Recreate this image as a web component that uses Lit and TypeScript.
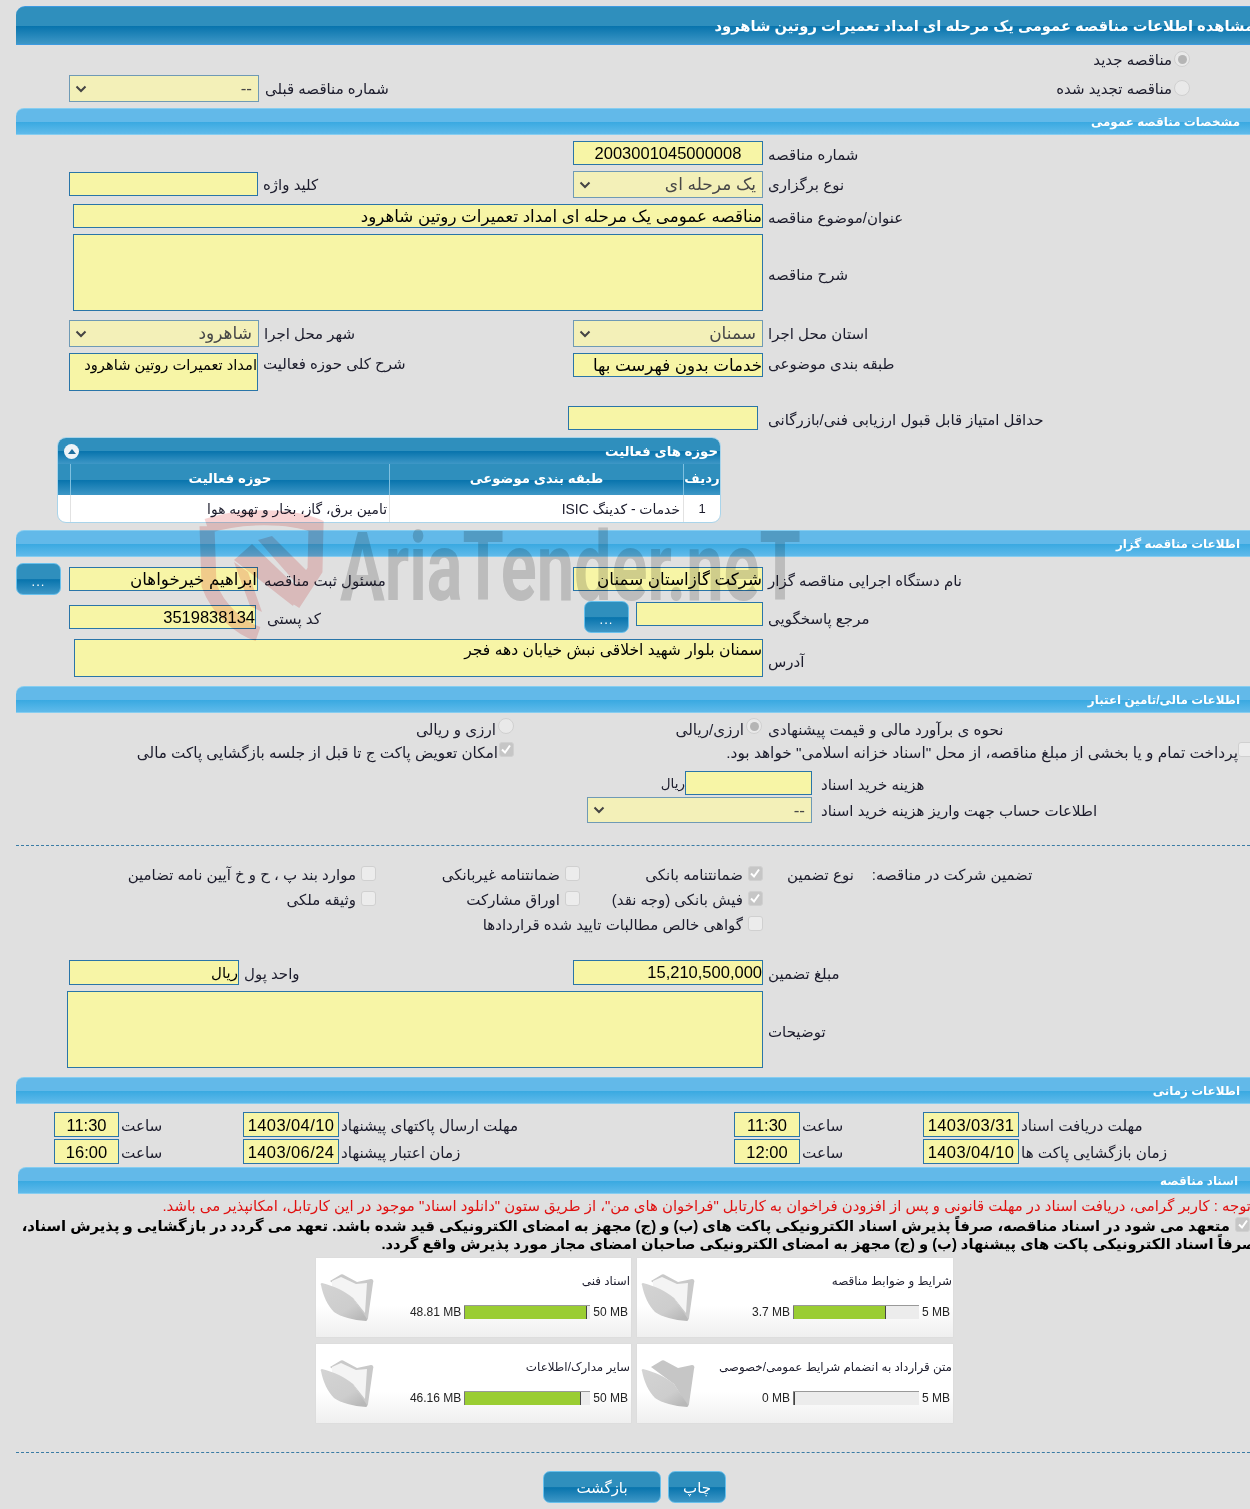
import { LitElement, html, css, svg } from "lit";
import { customElement } from "lit/decorators.js";

const inp = (cls: string, t = "") => html`<div class="inp ${cls}">${t}</div>`;
const sel = (cls: string, t: string) => html`<div class="sel ${cls}"><svg class="chev" viewBox="0 0 12 8" width="12" height="8"><path d="M1.5 1.5 6 6l4.5-4.5" fill="none" stroke="#444" stroke-width="2"/></svg><span>${t}</span></div>`;
const lb = (t: string, cls = "") => html`<span class="lb ${cls}">${t}</span>`;
const sec = (t: string, cls = "") => html`<div class="sec ${cls}"><span>${t}</span></div>`;
const dots = () => html`<div class="btn dots">...</div>`;
const tick = html`<svg viewBox="0 0 14 14" width="14" height="14"><path d="M3 7.5 6 10.5 11 3.5" fill="none" stroke="#fff" stroke-width="2"/></svg>`;
const cb = (t: string, on = false) => html`<label class="chk"><span class="lb">${t}</span><span class="box ${on ? "on" : ""}">${on ? tick : ""}</span></label>`;
const rad = (on = false) => html`<span class="rad ${on ? "on" : ""}"></span>`;

const folder = (paper: boolean) => svg`<svg class="folder" viewBox="0 0 60 60" width="60" height="60">
  <defs>
    <linearGradient id="fg" x1="0" y1="0" x2=".8" y2="1"><stop offset="0" stop-color="#d4d4d4"/><stop offset=".7" stop-color="#cdcdcd"/><stop offset="1" stop-color="#b8b8b8"/></linearGradient>
    <filter id="soft"><feGaussianBlur stdDeviation=".6"/></filter>
  </defs>
  <g filter="url(#soft)">
    <path d="M12 11 22 5c1-1 3-1 4 0l13 7 14-3c2 0 3 2 2 4l-5 35c0 2-1 2-2 1L35 28Z" fill="${paper ? "#c9c9c9" : "#c6c6c6"}"/>
    ${paper ? svg`<path d="M14 11 23 7l15 7 11-1-2 30-12-15-21-8Z" fill="#f4f4f4"/>` : ""}
    <path d="M3 15c-1-1 0-2 1-2 12 3 23 8 31 15l14 21c0 1 0 2-1 2-13-1-25-4-32-9C10 36 5 26 3 15Z" fill="url(#fg)"/>
  </g>
</svg>`;

const card = (title: string, used: string, max: string, pct: number, paper = true) => html`
  <div class="card">
    ${folder(paper)}
    <div class="cbody">
      <div class="ctitle">${title}</div>
      <div class="metric">
        <span>${used}</span>
        <div class="bar"><div class="fill" style="width:${pct}%"></div></div>
        <span>${max}</span>
      </div>
    </div>
  </div>`;

@customElement("app-root")
export class AppRoot extends LitElement {
  static styles = css`
    :host { display: block; position: relative; width: 1250px; height: 1509px; overflow: hidden; background: #e0e0e0; font-family: "Liberation Sans", "DejaVu Sans", sans-serif; font-size: 15px; color: #1c1c2c; }
    .page { padding-top: 6px; display: flex; flex-direction: column; }
    .page > * { flex: none; }
    .title { margin-left: 16px; height: 37px; border: 1px solid #3d9ae0; border-width: 1px 0; border-top-left-radius: 9px; background: linear-gradient(#2f8fbd 0 50%, #0874ad 52%, #3e97c6 100%); color: #fff; font-weight: bold; font-size: 14.7px; direction: rtl; display: flex; align-items: center; white-space: nowrap; overflow: hidden; }
    .title span { margin-right: -4px; }
    .sec { margin-left: 16px; height: 25px; border: 1px solid #86cdf0; border-width: 1px 0; border-top-left-radius: 8px; background: linear-gradient(#62b9e9 0 50%, #39a9e1 52%, #5fbaea 100%); color: #fff; font-weight: bold; font-size: 11.9px; direction: rtl; display: flex; align-items: center; padding-right: 10px; white-space: nowrap; }
    .sec.docs { margin: 3px 0 0 18px; padding-right: 12px; }
    .row { display: flex; align-items: flex-start; }
    .L { margin-left: 69px; width: 504px; display: flex; gap: 5px; align-items: flex-start; flex: none; }
    .R { display: flex; gap: 5px; align-items: flex-start; }
    .lb { direction: rtl; white-space: nowrap; line-height: 27px; }
    .inp { box-sizing: border-box; height: 24px; line-height: 23px; background: #f7f5a6; border: 1px solid #2a75a8; direction: rtl; white-space: nowrap; overflow: hidden; color: #000; font-size: 16.7px; flex: none; }
    .sel { box-sizing: border-box; width: 190px; height: 27px; line-height: 25px; background: #f3f0b8; border: 1px solid #6f9ab5; display: flex; justify-content: space-between; align-items: center; padding: 0 6px 0 5px; color: #484848; font-size: 17px; direction: ltr; flex: none; }
    .sel span { direction: rtl; }
    .chev { flex: none; }
    .w190 { width: 190px; } .w189 { width: 189px; } .w187 { width: 187px; } .w170 { width: 170px; } .w127 { width: 127px; } .w96 { width: 96px; } .w66 { width: 66px; } .w65 { width: 65px; } .w690 { width: 690px; } .w696 { width: 696px; }
    .num { font-size: 16.5px; font-family: "Liberation Sans", sans-serif; }
    .date { letter-spacing: .4px; }
    .ctr { text-align: center; }
    .area { height: 77px; }
    .unit { font-size: 15px; }
    .intro { height: 63px; display: flex; flex-direction: column; }
    .i1 { height: 24px; margin-top: 4px; width: 1190px; justify-content: flex-end; gap: 2px; }
    .i1 .lb { line-height: 24px; margin-top: -1px; }
    .i1 .rad { margin-top: 2px; }
    .i2 { height: 27px; margin-top: 2px; }
    .i2 .L { width: 985px; gap: 6px; }
    .i2 .R { width: 136px; justify-content: flex-end; gap: 2px; }
    .i2 .R .lb { line-height: 24px; margin-top: 2px; }
    .i2 .R .rad { margin-top: 5px; }
    .rad { display: inline-block; box-sizing: border-box; width: 16px; height: 16px; border-radius: 50%; border: 1.5px solid #d0d0d0; background: #e9e9e9; position: relative; flex: none; }
    .rad.on::after { content: ""; position: absolute; inset: 2.5px; border-radius: 50%; background: #b5b5b5; }
    .box { display: inline-flex; box-sizing: border-box; width: 15px; height: 15px; border-radius: 3px; border: 1.5px solid #d0d0d0; background: #ececec; flex: none; }
    .box.on { background: #c6c6c6; }
    .box svg { margin: -1px; }
    .chk { display: flex; gap: 5px; align-items: flex-start; }
    .chk .lb { line-height: 24px; margin-top: -1px; }
    .g .box { margin-top: 2px; }
    .mt6 { margin-top: 6px; } .mt7 { margin-top: 7px; } .mt9 { margin-top: 9px; } .mt15 { margin-top: 15px; }
    .top1 { margin-top: 1px; } .top4 { margin-top: 4px; } .topm3 { margin-top: -3px; }
    .h24 { height: 24px; } .h25 { height: 25px; } .h27 { height: 27px; } .h32 { height: 32px; } .h38 { height: 38px; } .h77 { height: 77px; }
    .wide { margin-left: 73px; display: flex; gap: 5px; align-items: flex-start; }
    .wide2 { margin-left: 67px; }
    .midlb { line-height: 81px; }
    .tall { height: 38px; font-size: 14.7px; }
    .minL { width: 499px; }
    .gap10 { gap: 10px; }
    .tbl { margin: 7px 0 0 57px; width: 664px; height: 86px; box-sizing: border-box; border: 1px solid #a9d4ea; border-radius: 9px; overflow: hidden; background: #fff; display: flex; flex-direction: column; }
    .thead { height: 26px; background: linear-gradient(#2f8fbd 0 50%, #0874ad 52%, #3e97c6 100%); color: #fff; font-weight: bold; font-size: 13.3px; direction: rtl; display: flex; align-items: center; justify-content: space-between; padding: 0 2px 0 6px; flex: none; }
    .toggle { width: 15px; height: 15px; border-radius: 50%; background: #eef4f8; display: flex; align-items: center; justify-content: center; }
    .tri { width: 0; height: 0; border: 4px solid transparent; border-top: 0; border-bottom: 5px solid #1f6f9f; }
    .cols { display: grid; grid-template-columns: 13px 319px 294px 36px; }
    .hcols { height: 31px; background: linear-gradient(#2f8fbd 0 50%, #0874ad 52%, #3e97c6 100%); color: #fff; font-weight: bold; font-size: 13.3px; flex: none; }
    .hcols > div { border-right: 1px solid #7fc0e0; text-align: center; line-height: 29px; direction: rtl; white-space: nowrap; }
    .hcols > div:last-child { border-right: 0; }
    .bcols { flex: 1; font-size: 13.9px; }
    .bcols > div { border-right: 1px solid #e2e2e2; direction: rtl; padding: 0 3px; line-height: 28px; white-space: nowrap; overflow: hidden; }
    .bcols > div:last-child { border-right: 0; text-align: center; font-size: 13px; }
    .bcols .l2 { padding-right: 2px; }
    .btn { box-sizing: border-box; border: 1px solid #68c0ec; border-radius: 7px; background: linear-gradient(#2f8fbd 0 50%, #0874ad 52%, #3e97c6 100%); color: #fff; text-align: center; font-size: 15px; flex: none; }
    .dots { width: 45px; height: 32px; line-height: 36px; font-size: 13px; letter-spacing: 1px; font-family: "Liberation Sans", sans-serif; }
    .contact1 { margin-left: 16px; }
    .c1L { display: flex; align-items: flex-start; width: 512px; flex: none; }
    .c1L .inp { margin-left: 8px; }
    .c1L .lb { margin-left: 6px; }
    .c1R { margin-left: 45px; }
    .c2L { width: 515px; gap: 11px; }
    .c2R { display: flex; align-items: flex-start; gap: 7px; }
    .c2R .lb { margin-left: -2px; }
    .addr { margin-left: 74px; display: flex; gap: 5px; align-items: flex-start; }
    .w689 { width: 689px; height: 38px; line-height: 20px; font-size: 15.6px; }
    .midlb2 { line-height: 45px; }
    .f1 { height: 24px; margin-top: 5px; }
    .f1 .lb, .f2 .lb { line-height: 24px; font-size: 15.2px; }
    .f1 .a { display: flex; gap: 2px; width: 137px; margin-left: 377px; justify-content: flex-end; flex: none; }
    .f1 .b { display: flex; gap: 2px; width: 248px; justify-content: flex-end; flex: none; }
    .f1 .c { margin-left: 6px; }
    .f2 { height: 24px; }
    .f2 .lb { line-height: 21px; margin-top: 0; }
    .f2 .a { width: 375px; margin-left: 139px; display: flex; justify-content: flex-end; flex: none; }
    .f2 .chk { gap: 1px; }
    .f2 .b { margin-left: 211px; width: 528px; display: flex; justify-content: flex-end; flex: none; }
    .f2 .b .lb { font-size: 15.4px; }
    .f3 { margin-top: 5px; height: 24px; padding-left: 661px; }
    .f3 .rial { width: 24px; flex: none; font-size: 13.5px; line-height: 25px; }
    .f3 .inp { width: 127px; }
    .f3 .inp + .lb, .f4 .sel + .lb { margin-left: 9px; }
    .f4 { margin-top: 2px; height: 26px; padding-left: 587px; }
    .f4 .sel { width: 225px; height: 26px; }
    .dash { margin: 0 0 0 16px; border-top: 1px dashed #3a7ca5; height: 0; }
    .dash1 { margin-top: 22px; }
    .dash2 { margin-top: 29px; }
    .g { display: grid; grid-template-columns: 380px 204px 183px auto; margin-top: 18px; height: 75px; grid-auto-rows: 25px; }
    .g > * { justify-self: end; padding-right: 4px; }
    .g .head { justify-self: start; display: flex; gap: 18px; padding: 0 0 0 20px; }
    .g .head .lb { line-height: 24px; margin-top: -1px; }
    .span3 { grid-column: 2 / span 2; }
    .b1 { margin-top: 21px; }
    .b1 .inp { height: 25px; }
    .t1 { margin-top: 8px; height: 25px; }
    .t2 { margin-top: 2px; height: 25px; }
    .tc { display: flex; gap: 2px; flex: none; align-items: flex-start; }
    .tc .lb { font-size: 15.2px; }
    .tc .inp { height: 25px; line-height: 24px; }
    .c1 { margin-left: 54px; width: 189px; }
    .c2 { width: 491px; }
    .c3 { width: 189px; }
    .c4 { width: 327px; }
    .red { direction: rtl; white-space: nowrap; color: #e01010; font-size: 14.9px; margin-top: 3px; height: 20px; line-height: 19px; margin-right: -1px; }
    .commit { direction: rtl; white-space: nowrap; color: #000; font-weight: bold; font-size: 14.8px; height: 18px; line-height: 18px; margin-right: -3px; }
    .commit1 { display: flex; gap: 5px; margin-right: 0; }
    .commit2 { font-size: 14.7px; margin-right: -6px; }
    .cards { margin: 5px 0 0 316px; display: grid; grid-template-columns: 315px 316px; gap: 7px 6px; }
    .card { height: 79px; background: linear-gradient(#fff 60%, #efefef 100%); box-shadow: 0 0 1px #ccc; display: flex; align-items: flex-start; }
    .folder { flex: none; margin: 12px 0 0 2px; }
    .cbody { flex: 1; display: flex; flex-direction: column; align-items: flex-end; padding-right: 3px; }
    .ctitle { direction: rtl; font-size: 11.9px; margin-top: 15px; height: 30px; line-height: 17px; white-space: nowrap; margin-right: -2px; }
    .metric { display: flex; align-items: center; font-size: 12px; color: #222; gap: 3px; height: 18px; }
    .bar { width: 126px; height: 14px; box-sizing: border-box; background: #ececec; border-top: 1px solid #999; }
    .fill { height: 13px; box-sizing: border-box; background: #9acd32; border-left: 1px solid #777; border-right: 1px solid #444; }
    .actions { margin: 18px 0 0 543px; display: flex; gap: 7px; }
    .act { height: 32px; line-height: 32px; }
    .back { width: 118px; }
    .print { width: 58px; }
    .wm { position: absolute; left: 0; top: 0; width: 1250px; height: 1509px; pointer-events: none; mix-blend-mode: multiply; }
    .wmt { position: absolute; left: 340px; top: 502px; font-family: Roboto, sans-serif; font-weight: 700; font-size: 96px; line-height: 130px; color: #d6d6d6; white-space: nowrap; transform: scaleX(.694); transform-origin: left top; }
    .wms { position: absolute; left: 0; top: 0; }
  `;

  render() {
    return html`
      <div class="page" dir="ltr">
        <div class="title"><span>مشاهده اطلاعات مناقصه عمومی یک مرحله ای امداد تعمیرات روتین شاهرود</span></div>
        <div class="intro">
          <div class="row i1">${lb("مناقصه جدید")}${rad(true)}</div>
          <div class="row i2">
            <div class="L">${sel("", "--")}${lb("شماره مناقصه قبلی")}</div>
            <div class="R">${lb("مناقصه تجدید شده")}${rad()}</div>
          </div>
        </div>

        ${sec("مشخصات مناقصه عمومی")}
        <div class="row mt6 h24"><div class="L"></div><div class="R">${inp("w190 num ctr", "2003001045000008")}${lb("شماره مناقصه")}</div></div>
        <div class="row mt6 h27"><div class="L">${inp("w189 top1")}${lb("کلید واژه")}</div><div class="R">${sel("", "یک مرحله ای")}${lb("نوع برگزاری")}</div></div>
        <div class="row mt6 h24"><div class="wide">${inp("w690", "مناقصه عمومی یک مرحله ای امداد تعمیرات روتین شاهرود")}${lb("عنوان/موضوع مناقصه")}</div></div>
        <div class="row mt6 h77"><div class="wide">${inp("w690 area")}${lb("شرح مناقصه", "midlb")}</div></div>
        <div class="row mt9 h27"><div class="L">${sel("", "شاهرود")}${lb("شهر محل اجرا")}</div><div class="R">${sel("", "سمنان")}${lb("استان محل اجرا")}</div></div>
        <div class="row mt6 h38"><div class="L">${inp("w189 tall", "امداد تعمیرات روتین شاهرود")}${lb("شرح کلی حوزه فعالیت", "topm3")}</div><div class="R">${inp("w190", "خدمات بدون فهرست بها")}${lb("طبقه بندی موضوعی", "topm3")}</div></div>
        <div class="row mt15 h24"><div class="L minL"></div><div class="R gap10">${inp("w190")}${lb("حداقل امتیاز قابل قبول ارزیابی فنی/بازرگانی")}</div></div>

        <div class="tbl">
          <div class="thead"><span>حوزه های فعالیت</span><span class="toggle"><span class="tri"></span></span></div>
          <div class="cols hcols"><div></div><div>حوزه فعالیت</div><div>طبقه بندی موضوعی</div><div>ردیف</div></div>
          <div class="cols bcols"><div></div><div class="l2">تامین برق، گاز، بخار و تهویه هوا</div><div>خدمات - کدینگ ISIC</div><div>1</div></div>
        </div>

        <div class="mt7">${sec("اطلاعات مناقصه گزار")}</div>
        <div class="row mt6 h32 contact1">
          <div class="c1L">${dots()}${inp("w189 top4", "ابراهیم خیرخواهان")}${lb("مسئول ثبت مناقصه", "top4")}</div>
          <div class="R c1R">${inp("w190 top4", "شرکت گازاستان سمنان")}${lb("نام دستگاه اجرایی مناقصه گزار", "top4")}</div>
        </div>
        <div class="row mt6 h32">
          <div class="L c2L">${inp("w187 top4 num", "3519838134")}${lb("کد پستی", "top4")}</div>
          <div class="c2R">${dots()}${inp("w127 top1")}${lb("مرجع پاسخگویی", "top4")}</div>
        </div>
        <div class="row mt6 h38"><div class="addr">${inp("w689", "سمنان بلوار شهید اخلاقی نبش خیابان دهه فجر")}${lb("آدرس", "midlb2")}</div></div>

        <div class="mt9">${sec("اطلاعات مالی/تامین اعتبار")}</div>
        <div class="row f1">
          <div class="a">${lb("ارزی و ریالی")}${rad()}</div>
          <div class="b">${lb("ارزی/ریالی")}${rad(true)}</div>
          ${lb("نحوه ی برآورد مالی و قیمت پیشنهادی", "c")}
        </div>
        <div class="row f2">
          <div class="a">${cb("امکان تعویض پاکت ج تا قبل از جلسه بازگشایی پاکت مالی", true)}</div>
          <div class="b">${lb('پرداخت تمام و یا بخشی از مبلغ مناقصه، از محل "اسناد خزانه اسلامی" خواهد بود.')}<span class="box"></span></div>
        </div>
        <div class="row f3">${lb("ریال", "rial")}${inp("")}${lb("هزینه خرید اسناد")}</div>
        <div class="row f4">${sel("", "--")}${lb("اطلاعات حساب جهت واریز هزینه خرید اسناد")}</div>
        <div class="dash dash1"></div>

        <div class="g">
          ${cb("موارد بند پ ، ح و خ آیین نامه تضامین")}${cb("ضمانتنامه غیربانکی")}${cb("ضمانتنامه بانکی", true)}
          <div class="head">${lb("نوع تضمین")}${lb("تضمین شرکت در مناقصه:")}</div>
          ${cb("وثیقه ملکی")}${cb("اوراق مشارکت")}${cb("فیش بانکی (وجه نقد)", true)}<span></span>
          <span></span><span class="span3">${cb("گواهی خالص مطالبات تایید شده قراردادها")}</span>
        </div>

        <div class="row b1 h25"><div class="L">${inp("w170 unit", "ریال")}${lb("واحد پول")}</div><div class="R">${inp("w190 num", "15,210,500,000")}${lb("مبلغ تضمین")}</div></div>
        <div class="row mt6 h77"><div class="wide wide2">${inp("w696 area")}${lb("توضیحات", "midlb")}</div></div>

        <div class="mt9">${sec("اطلاعات زمانی")}</div>
        <div class="row t1">
          <div class="tc c1">${inp("w65 num ctr", "11:30")}${lb("ساعت")}</div>
          <div class="tc c2">${inp("w96 num ctr date", "1403/04/10")}${lb("مهلت ارسال پاکتهای پیشنهاد")}</div>
          <div class="tc c3">${inp("w66 num ctr", "11:30")}${lb("ساعت")}</div>
          <div class="tc c4">${inp("w96 num ctr date", "1403/03/31")}${lb("مهلت دریافت اسناد")}</div>
        </div>
        <div class="row t2">
          <div class="tc c1">${inp("w65 num ctr", "16:00")}${lb("ساعت")}</div>
          <div class="tc c2">${inp("w96 num ctr date", "1403/06/24")}${lb("زمان اعتبار پیشنهاد")}</div>
          <div class="tc c3">${inp("w66 num ctr", "12:00")}${lb("ساعت")}</div>
          <div class="tc c4">${inp("w96 num ctr date", "1403/04/10")}${lb("زمان بازگشایی پاکت ها")}</div>
        </div>

        ${sec("اسناد مناقصه", "docs")}
        <div class="red">توجه : کاربر گرامی، دریافت اسناد در مهلت قانونی و پس از افزودن فراخوان به کارتابل "فراخوان های من"، از طریق ستون "دانلود اسناد" موجود در این کارتابل، امکانپذیر می باشد.</div>
        <div class="commit commit1"><span class="box on">${tick}</span><span>متعهد می شود در اسناد مناقصه، صرفاً پذیرش اسناد الکترونیکی پاکت های (ب) و (ج) مجهز به امضای الکترونیکی قید شده باشد. تعهد می گردد در بازگشایی و پذیرش اسناد،</span></div>
        <div class="commit commit2">صرفاً اسناد الکترونیکی پاکت های پیشنهاد (ب) و (ج) مجهز به امضای الکترونیکی صاحبان امضای مجاز مورد پذیرش واقع گردد.</div>

        <div class="cards">
          ${card("اسناد فنی", "48.81 MB", "50 MB", 97.6)}
          ${card("شرایط و ضوابط مناقصه", "3.7 MB", "5 MB", 74)}
          ${card("سایر مدارک/اطلاعات", "46.16 MB", "50 MB", 92.3)}
          ${card("متن قرارداد به انضمام شرایط عمومی/خصوصی", "0 MB", "5 MB", 0, false)}
        </div>

        <div class="dash dash2"></div>
        <div class="actions"><div class="btn act back">بازگشت</div><div class="btn act print">چاپ</div></div>
      </div>

      <div class="wm" aria-hidden="true">
        <svg class="wms" width="1250" height="700" viewBox="0 0 1250 700">
          <path d="M207 526C240 515 290 515 316 526L315 570 293 604M207 526 209 585C218 610 240 628 258 634" fill="none" stroke="#f8d4d4" stroke-width="15"/>
          <path d="M234 560 252 544 300 590 293 606Z" fill="#f8d4d4"/>
          <path d="M258 540 272 536 316 580 302 590Z" fill="#f8d4d4"/>
          <path d="M234 562 248 572 262 612 250 606Z" fill="#f8d4d4"/>
        </svg>
        <div class="wmt">AriaTender.neT</div>
      </div>
    `;
  }
}
